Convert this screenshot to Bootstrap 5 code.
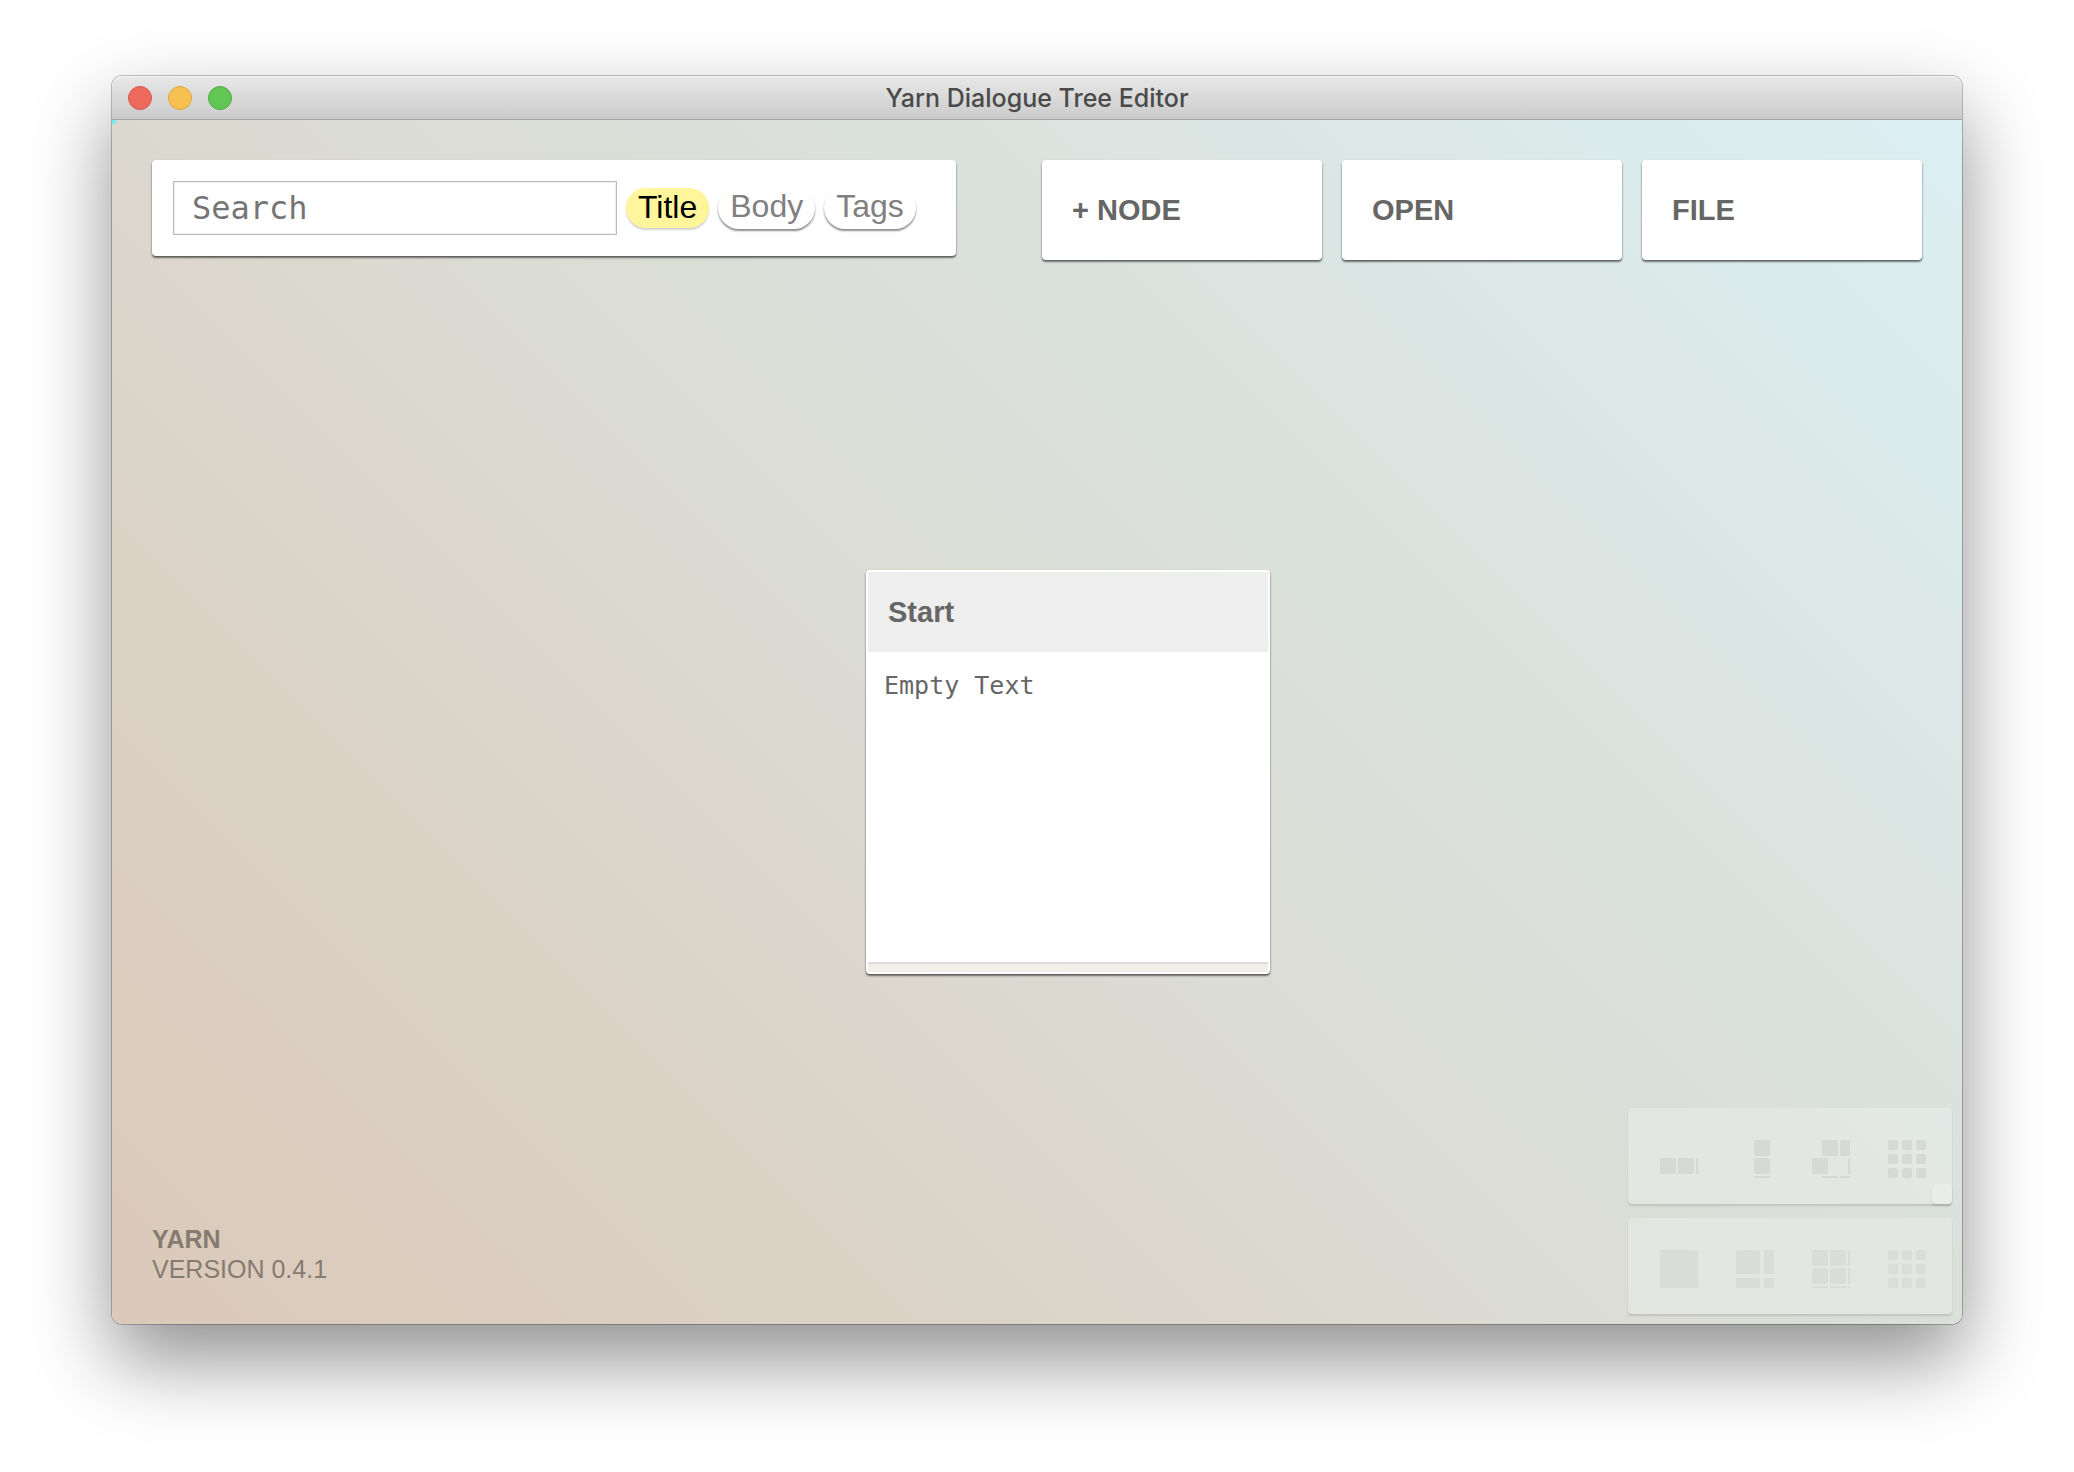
<!DOCTYPE html>
<html lang="en">
<head>
<meta charset="utf-8">
<meta name="viewport" content="width=device-width, initial-scale=1">
<title>Yarn Dialogue Tree Editor</title>
<link href="https://cdn.jsdelivr.net/npm/bootstrap@5.3.0/dist/css/bootstrap.min.css" rel="stylesheet">
<style>
  body { background: #fff; font-family: "Liberation Sans", Arial, sans-serif; color: #666; }
  .desktop { padding: 76px 112px 148px; }
  .app-window {
    border-radius: 10px;
    box-shadow: 0 0 0 1px rgba(0,0,0,.24), 0 36px 80px rgba(0,0,0,.44);
  }
  .title-bar {
    height: 44px; padding: 0 16px;
    background: linear-gradient(#e8e8e8, #cbcbcb);
    border-bottom: 1px solid #a5a5a5;
    box-shadow: inset 0 1px 0 #f6f6f6;
    border-radius: 10px 10px 0 0;
  }
  .lights { flex: 1 1 0; gap: 16px; }
  .light { width: 24px; height: 24px; padding: 0; border: 1px solid; border-radius: 50%; }
  .light-close { background: #ee6a5f; border-color: #d5574c; }
  .light-min { background: #f6c150; border-color: #dba63f; }
  .light-zoom { background: #62c655; border-color: #51ab40; }
  .title-text { font: 500 25px/32px Inter, sans-serif; color: #4a4a4a; }
  .workspace {
    padding: 40px 40px 10px;
    border-radius: 0 0 10px 10px;
    background: linear-gradient(45deg, #dbc9b9 0%, #dbd5ca 33%, #dbdcd4 47%, #dbe0db 62%, #dcedee 93%, #dbeef3 100%);
  }
  .origin-dot { left: 0; top: 0; width: 4px; height: 4px; background: #7ee9ee; }
  .raised { background: #fff; border-radius: 4px; box-shadow: 0 2px 2px rgba(0,0,0,.45), 0 1px 2px rgba(0,0,0,.28); }
  .search-panel { width: 804px; height: 96px; padding: 20px 21px; }
  .search-box {
    width: 444px; height: 54px; padding: 0 18px; border: 1px solid #bbb; border-radius: 0;
    font: 32px/40px "DejaVu Sans Mono", monospace; box-shadow: inset 0 0 0 1px #eee;
  }
  .search-box::placeholder { color: #757575; opacity: 1; }
  .pills { gap: 9px; margin-left: 9px; }
  .pill { border-radius: 21px; font-size: 32px; line-height: 38px; height: 42px; padding: 0 12px; color: #808080; cursor: pointer; box-shadow: 0 2px 2px rgba(0,0,0,.45); }
  .btn-check:checked + .pill { height: 40px; background: #fff59b; color: #000; box-shadow: 0 2px 2px rgba(0,0,0,.18); }
  .menu { gap: 20px; }
  .menu-btn { width: 280px; height: 100px; padding: 0 30px; border: 0; font-size: 29px; font-weight: 700; line-height: 36px; text-align: left; color: #666; }
  .story-node { left: 754px; top: 450px; width: 404px; height: 404px; padding: 2px; }
  .node-title { height: 80px; padding: 0 20px; background: #eee; font-size: 29px; line-height: 80px; font-weight: 700; }
  .node-body { padding: 16px; font: 25px/36px "DejaVu Sans Mono", monospace; }
  .node-foot { height: 10px; background: #f0efea; border-top: 2px solid #ddd; }
  .version { font-size: 25px; line-height: 30px; color: #857b71; padding-bottom: 30px; }
  .tools { gap: 14px; margin-right: -30px; }
  .tool-panel { width: 324px; height: 96px; padding: 32px 26px 26px 32px; gap: 38px; border-radius: 4px; background: rgba(255,255,255,.24); box-shadow: 0 2px 2px rgba(0,0,0,.12); }
  .tool-btn { width: 38px; height: 38px; padding: 0; border: 0; background: none; }
  .tool-btn svg { display: block; fill: #d6dad6; }
  .faint svg { fill: #dadcd7; }
  .grip { right: 0; bottom: 0; width: 20px; height: 20px; padding: 0; border: 0; border-radius: 4px; background: #e8ede9; box-shadow: 0 2px 2px rgba(0,0,0,.12); }
</style>
</head>
<body>
<div class="desktop min-vh-100 d-flex">
  <div class="app-window flex-grow-1 d-flex flex-column">
    <header class="title-bar d-flex align-items-center">
      <div class="lights d-flex">
        <button class="light light-close" aria-label="Close"></button>
        <button class="light light-min" aria-label="Minimize"></button>
        <button class="light light-zoom" aria-label="Zoom"></button>
      </div>
      <div class="title-text">Yarn Dialogue Tree Editor</div>
      <div class="lights"></div>
    </header>
    <main class="workspace position-relative flex-grow-1 d-flex flex-column justify-content-between">
      <span class="origin-dot position-absolute"></span>
      <div class="d-flex justify-content-between align-items-start">
        <form class="search-panel raised d-flex align-items-center">
          <input class="search-box" type="text" placeholder="Search" aria-label="Search">
          <div class="pills d-flex align-items-center">
            <input class="btn-check" type="checkbox" id="in-title" checked><label class="pill" for="in-title">Title</label>
            <input class="btn-check" type="checkbox" id="in-body"><label class="pill" for="in-body">Body</label>
            <input class="btn-check" type="checkbox" id="in-tags"><label class="pill" for="in-tags">Tags</label>
          </div>
        </form>
        <nav class="menu d-flex">
          <button class="menu-btn raised">+ NODE</button>
          <button class="menu-btn raised">OPEN</button>
          <button class="menu-btn raised">FILE</button>
        </nav>
      </div>

      <article class="story-node raised position-absolute d-flex flex-column">
        <div class="node-title">Start</div>
        <div class="node-body flex-grow-1">Empty Text</div>
        <div class="node-foot"></div>
      </article>

      <footer class="d-flex justify-content-between align-items-end">
        <div class="version"><strong>YARN</strong><br>VERSION 0.4.1</div>
        <div class="tools d-flex flex-column">
          <div class="tool-panel position-relative d-flex">
            <button class="tool-btn" aria-label="Arrange in a row"><svg width="38" height="38"><rect y="18" width="16" height="16" rx="2"/><rect x="18" y="18" width="16" height="16" rx="2"/><rect x="36" y="18" width="2" height="16"/></svg></button>
            <button class="tool-btn" aria-label="Arrange in a column"><svg width="38" height="38"><rect x="18" width="16" height="16" rx="2"/><rect x="18" y="18" width="16" height="16" rx="2"/><rect x="18" y="36" width="16" height="2"/></svg></button>
            <button class="tool-btn" aria-label="Arrange in a spiral"><svg width="38" height="38"><rect x="10" width="16" height="16" rx="2"/><path d="M30 0h8v16H30a2 2 0 0 1-2-2V2a2 2 0 0 1 2-2z"/><rect y="18" width="16" height="16" rx="2"/><path d="M36 18h2v16h-2zM10 36h16v2H10zM28 36h10v2H28z"/></svg></button>
            <button class="tool-btn" aria-label="Arrange in a grid"><svg width="38" height="38"><rect width="10" height="10" rx="2"/><rect x="14" width="10" height="10" rx="2"/><rect x="28" width="10" height="10" rx="2"/><rect y="14" width="10" height="10" rx="2"/><rect x="14" y="14" width="10" height="10" rx="2"/><rect x="28" y="14" width="10" height="10" rx="2"/><rect y="28" width="10" height="10" rx="2"/><rect x="14" y="28" width="10" height="10" rx="2"/><rect x="28" y="28" width="10" height="10" rx="2"/></svg></button>
            <button class="grip position-absolute" aria-label="Toggle tools"></button>
          </div>
          <div class="tool-panel faint d-flex">
            <button class="tool-btn" aria-label="Zoom 100%"><svg width="38" height="38"><rect width="38" height="38" rx="1"/></svg></button>
            <button class="tool-btn" aria-label="Zoom 75%"><svg width="38" height="38"><rect width="24" height="24" rx="2"/><rect x="28" width="10" height="24" rx="1"/><rect y="28" width="24" height="10" rx="1"/><rect x="28" y="28" width="10" height="10" rx="1"/></svg></button>
            <button class="tool-btn" aria-label="Zoom 50%"><svg width="38" height="38"><rect width="16" height="16" rx="2"/><rect x="18" width="16" height="16" rx="2"/><rect y="18" width="16" height="16" rx="2"/><rect x="18" y="18" width="16" height="16" rx="2"/><path d="M36 0h2v16h-2zM36 18h2v16h-2zM0 36h16v2H0zM18 36h16v2H18zM36 36h2v2h-2z"/></svg></button>
            <button class="tool-btn" aria-label="Zoom 25%"><svg width="38" height="38"><rect width="10" height="10" rx="2"/><rect x="14" width="10" height="10" rx="2"/><rect x="28" width="10" height="10" rx="2"/><rect y="14" width="10" height="10" rx="2"/><rect x="14" y="14" width="10" height="10" rx="2"/><rect x="28" y="14" width="10" height="10" rx="2"/><rect y="28" width="10" height="10" rx="2"/><rect x="14" y="28" width="10" height="10" rx="2"/><rect x="28" y="28" width="10" height="10" rx="2"/></svg></button>
          </div>
        </div>
      </footer>
    </main>
  </div>
</div>
<script src="https://cdn.jsdelivr.net/npm/bootstrap@5.3.0/dist/js/bootstrap.bundle.min.js"></script>
</body>
</html>
